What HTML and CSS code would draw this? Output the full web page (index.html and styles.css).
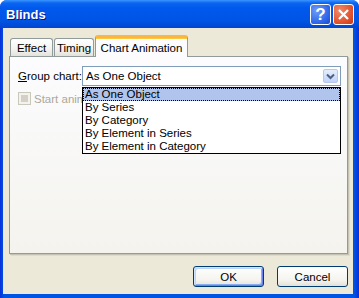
FILE: index.html
```html
<!DOCTYPE html>
<html lang="en">
  <head>
    <meta charset="UTF-8" />
    <title>Blinds</title>
    <link rel="stylesheet" href="styles.css">
  </head>

  <body>
    <div class="window">
      <div class="titlebar">
        <span class="title">Blinds</span>
        <div class="title-buttons">
          <span class="tbtn help">?</span>
          <span class="tbtn close">
            <svg width="13" height="13" viewBox="0 0 13 13">
              <path d="M2 2 L11 11 M11 2 L2 11" stroke="#fff" stroke-width="2.2" />
            </svg>
          </span>
        </div>
      </div>

      <div class="client">
        <div class="tabs">
          <span class="tab tab-effect">Effect</span>
          <span class="tab tab-timing">Timing</span>
          <span class="tab active">Chart Animation</span>
        </div>

        <div class="panel">
          <div class="row">
            <label class="label"><u>G</u>roup chart:</label>
            <div class="combo-wrap">
              <div class="combo">
                <span class="combo-value">As One Object</span>
                <span class="combo-btn">
                  <svg width="9" height="7" viewBox="0 0 9 7">
                    <path d="M1 1.5 L4.5 5 L8 1.5" stroke="#4d6185" stroke-width="2" fill="none" />
                  </svg>
                </span>
              </div>
              <!-- open dropdown list -->
              <ul class="list">
                <li class="selected">As One Object</li>
                <li>By Series</li>
                <li>By Category</li>
                <li>By Element in Series</li>
                <li>By Element in Category</li>
              </ul>
            </div>
          </div>

          <div class="check-row">
            <span class="checkbox"></span>
            <span class="check-label">Start animation by drawing the chart background</span>
          </div>

          <span class="watermark">www.java2s.com</span>
        </div>

        <div class="buttons">
          <button class="btn default">OK</button>
          <button class="btn">Cancel</button>
        </div>
      </div>
    </div>
  </body>
</html>
```

FILE: styles.css
```css
body {
  margin: 0;
  padding: 0;
  font-family: "Liberation Sans", Arial, sans-serif;
  font-size: 11px;
  background-color: #fff;
}

.window {
  width: 359px;
  height: 298px;
  display: flex;
  flex-direction: column;
  background: linear-gradient(to right, #0831d9, #0054e3 4px, #0054e3 calc(100% - 5px), #0831d9);
  border-radius: 7px 7px 0 0;
  overflow: hidden;
}

.titlebar {
  height: 28px;
  display: flex;
  align-items: center;
  justify-content: space-between;
  padding: 0 5px 0 6px;
  background: linear-gradient(to bottom, #3d95ff 0, #0a66f0 3px, #0058ee 8px, #0055e5 20px, #0046d0 28px);
  flex-shrink: 0;
}

.title {
  color: #fff;
  font-weight: bold;
  font-size: 13px;
  text-shadow: 1px 1px 0 #0a1883;
  margin-top: 1px;
}

.title-buttons {
  display: flex;
  gap: 2px;
  margin-top: 1px;
}

.tbtn {
  width: 19px;
  height: 19px;
  border: 1px solid #fff;
  border-radius: 3px;
  display: flex;
  align-items: center;
  justify-content: center;
  color: #fff;
  font-weight: bold;
  font-size: 17px;
}

.help {
  background: radial-gradient(circle at 30% 30%, #6d9cf8, #2a62e8 70%, #1c49c8);
}

.close {
  background: radial-gradient(circle at 30% 30%, #f08a6a, #e0512b 65%, #c63a18);
}

.client {
  flex: 1;
  margin: 0 6px 4px 3px;
  background-color: #ece9d8;
  display: flex;
  flex-direction: column;
}

.tabs {
  display: flex;
  align-items: flex-end;
  margin: 7px 0 0 7px;
  height: 22px;
  position: relative;
  z-index: 1;
}

.tab {
  height: 17px;
  box-sizing: content-box;
  display: flex;
  align-items: center;
  justify-content: center;
  border: 1px solid #919b9c;
  border-bottom: none;
  border-radius: 3px 3px 0 0;
  background: linear-gradient(to bottom, #fff, #f3f3ef 60%, #e3e2da);
  margin-right: 1px;
  color: #000;
  margin-bottom: 1px;
  font-size: 11.5px;
}

.tab-effect {
  width: 41px;
}

.tab-timing {
  width: 38px;
}

.tab.active {
  width: 91px;
  height: 19px;
  background: #fcfcfe;
  border-top: 3px solid #f9b646;
  border-radius: 3px 3px 0 0;
  margin-bottom: 0;
  margin-right: 0;
  box-shadow: inset 0 1px 0 #ffc73c;
}

.panel {
  margin: -1px 0 0 6px;
  border: 1px solid #919b9c;
  box-shadow: 1px 1px 0 #c5c2b2, 2px 2px 0 #dddbce;
  background: linear-gradient(to bottom, #fcfcfe, #f4f3ee);
  position: relative;
  padding: 9px 0 0 8px;
  box-sizing: border-box;
  height: 198px;
  width: 339px;
}

/* faint site watermark lying over the open list */
.watermark {
  position: absolute;
  left: 36px;
  top: 44px;
  font-size: 35px;
  color: rgba(0, 0, 0, 0.025);
  white-space: nowrap;
  pointer-events: none;
  z-index: 3;
}

.row {
  display: flex;
  align-items: center;
}

.label {
  white-space: nowrap;
  flex-shrink: 0;
  font-size: 11.5px;
}

.label u {
  text-decoration: underline;
}

.combo-wrap {
  position: relative;
  margin-left: auto;
  margin-right: 6px;
}

.combo {
  width: 259px;
  height: 20px;
  box-sizing: border-box;
  border: 1px solid #7f9db9;
  background: #fff;
  display: flex;
  align-items: center;
  justify-content: space-between;
  padding: 0 2px 0 3px;
}

.combo-value {
  font-size: 11.5px;
}

.combo-btn {
  width: 15px;
  height: 14px;
  box-sizing: border-box;
  border: 1px solid #b7c7ee;
  border-radius: 2px;
  background: linear-gradient(to bottom, #e6eefc, #c1d3fb);
  display: flex;
  align-items: center;
  justify-content: center;
}

.list {
  position: absolute;
  left: 0;
  top: 21px;
  width: 259px;
  margin: 0;
  padding: 0;
  list-style: none;
  border: 1px solid #000;
  background: #fff;
  box-sizing: border-box;
  z-index: 2;
}

.list li {
  height: 13px;
  line-height: 13px;
  padding-left: 2px;
  font-size: 11.5px;
  white-space: nowrap;
}

.list li.selected {
  background: #b0c4ec;
  outline: 1px dotted #000;
  outline-offset: -1px;
}

.check-row {
  display: flex;
  align-items: center;
  gap: 3px;
  margin-top: 6px;
}

.checkbox {
  width: 11px;
  height: 11px;
  border: 1px solid #cac8bb;
  background: #d4d0c8;
  box-shadow: inset 0 0 0 2px #f3f2ec;
  flex-shrink: 0;
}

.check-label {
  color: #aca899;
  white-space: nowrap;
  font-size: 11.5px;
}

.buttons {
  display: flex;
  justify-content: flex-end;
  gap: 13px;
  margin: 12px 5px 0 0;
}

.btn {
  width: 71px;
  height: 21px;
  font-family: "Liberation Sans", Arial, sans-serif;
  font-size: 11.5px;
  color: #000;
  border: 1px solid #003c74;
  border-radius: 3px;
  background: linear-gradient(to bottom, #fff, #f4f3ee 70%, #e3e1d5);
  padding: 0;
}

.btn.default {
  box-shadow: inset 1px 1px 0 #cee7ff, inset -1px -1px 0 #6982ee, inset 2px 2px 0 #bcd4f6, inset -2px -2px 0 #89adf4;
}
```
